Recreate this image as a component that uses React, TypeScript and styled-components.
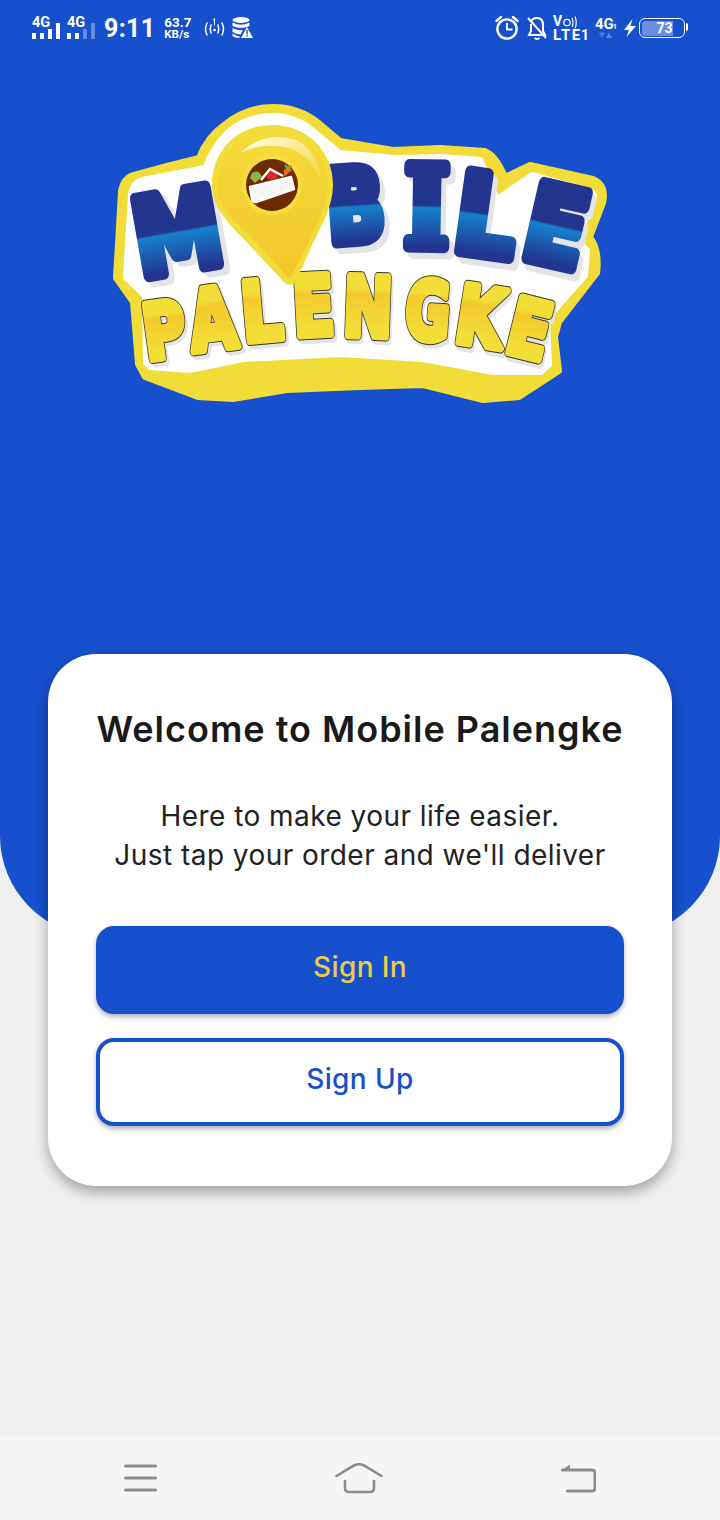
import styled, { createGlobalStyle } from 'styled-components';

const BLUE = '#1750cc';

const GlobalStyle = createGlobalStyle`
  html, body {
    margin: 0;
    padding: 0;
    background: #efefef;
  }
  * {
    box-sizing: border-box;
  }
`;

const blueLetters = [
  { ch: 'M', cx: 184, base: 270, size: 108, sx: 0.82, rot: -10, font: 'DejaVu Sans' },
  { ch: 'B', cx: 358, base: 241, size: 100, sx: 0.76, rot: -4, font: 'DejaVu Sans' },
  { ch: 'I', cx: 426, base: 247, size: 112, sx: 0.86, rot: 1, font: 'DejaVu Serif' },
  { ch: 'L', cx: 481, base: 254, size: 110, sx: 0.88, rot: 8, font: 'DejaVu Sans' },
  { ch: 'E', cx: 548, base: 263, size: 106, sx: 0.84, rot: 13, font: 'DejaVu Sans' },
];

const yellowLetters = [
  { ch: 'P', cx: 168, base: 357, size: 76, sx: 0.76, rot: -8 },
  { ch: 'A', cx: 216, base: 349, size: 84, sx: 0.72, rot: -7 },
  { ch: 'L', cx: 264, base: 340, size: 82, sx: 0.78, rot: -5 },
  { ch: 'E', cx: 315, base: 335, size: 82, sx: 0.74, rot: -3 },
  { ch: 'N', cx: 367, base: 336, size: 82, sx: 0.72, rot: 2 },
  { ch: 'G', cx: 426, base: 339, size: 80, sx: 0.68, rot: 4 },
  { ch: 'K', cx: 476, base: 345, size: 80, sx: 0.76, rot: 9 },
  { ch: 'E', cx: 523, base: 356, size: 78, sx: 0.78, rot: 14 },
];

function Logo() {
  return (
    <LogoSvg viewBox="100 95 520 320" width="520" height="320">
      <defs>
        <linearGradient id="blueFill" x1="0" y1="0" x2="0" y2="1">
          <stop offset="0.48" stopColor="#23358f" />
          <stop offset="0.5" stopColor="#1580cc" />
          <stop offset="0.8" stopColor="#23358f" />
        </linearGradient>
        <linearGradient id="yellowFill" x1="0" y1="0" x2="0" y2="1">
          <stop offset="0.3" stopColor="#f3de38" />
          <stop offset="0.36" stopColor="#f3c92c" />
          <stop offset="0.72" stopColor="#f3de38" />
        </linearGradient>
        <linearGradient id="pinFill" x1="0" y1="0" x2="0" y2="1">
          <stop offset="0" stopColor="#f5dc3a" />
          <stop offset="1" stopColor="#f3c52a" />
        </linearGradient>
        <linearGradient id="glare" x1="0" y1="0" x2="1" y2="0.6">
          <stop offset="0.1" stopColor="#fffbe0" />
          <stop offset="1" stopColor="#fffbe0" stopOpacity="0.2" />
        </linearGradient>
      </defs>

      <path
        d="M116 278 L121 192 Q123 178 134 175 L167 166 L199 158 Q207 137 224 125 Q246 107 273 107 Q300 107 320 124 L340 141 L393 150 L440 148 L485 151 Q496 155 505 177 L530 165 L593 179 Q607 185 603 203 L590 237 Q600 250 597 273 L559 322 L555 337 L559 371 L519 397 L483 400 L423 385 L360 387 L287 390 L233 399 L198 397 L145 377 L138 364 L133 302 L116 278 Z"
        fill="#f2dd38"
        stroke="#f2dd38"
        strokeWidth="6"
        strokeLinejoin="round"
      />
      <path
        d="M125 278 L130 194 Q132 182 142 179 L205 167 Q212 147 227 132 Q246 115 273 115 Q297 115 316 132 L340 152 L395 157 L440 156 L481 159 L497 198 L532 174 L586 189 Q596 192 595 197 L578 240 L588 250 L586 276 L548 319 L550 365 L541 373 L493 373 L423 360 L340 355 L243 360 L190 371 L150 368 L145 363 L144 296 L125 278 Z"
        fill="#ffffff"
        stroke="#ffffff"
        strokeWidth="4"
        strokeLinejoin="round"
      />

      {blueLetters.map((l) => (
        <g key={l.ch} transform={`translate(${l.cx} ${l.base}) rotate(${l.rot}) scale(${l.sx} 1)`}>
          <LogoText x="6" y="6" fontSize={l.size} fontFamily={l.font} fill="#e2e4e8" stroke="#e2e4e8" strokeWidth="12">
            {l.ch}
          </LogoText>
          <LogoText fontSize={l.size} fontFamily={l.font} fill="url(#blueFill)" stroke="url(#blueFill)" strokeWidth="12">
            {l.ch}
          </LogoText>
        </g>
      ))}

      {yellowLetters.map((l, i) => (
        <g key={i} transform={`translate(${l.cx} ${l.base}) rotate(${l.rot}) scale(${l.sx} 1)`}>
          <LogoText x="3" y="4" fontSize={l.size} fontFamily="DejaVu Sans" fill="#e2e4e8" stroke="#e2e4e8" strokeWidth="9">
            {l.ch}
          </LogoText>
          <LogoText fontSize={l.size} fontFamily="DejaVu Sans" fill="#38351f" stroke="#38351f" strokeWidth="9.500">
            {l.ch}
          </LogoText>
          <LogoText fontSize={l.size} fontFamily="DejaVu Sans" fill="url(#yellowFill)" stroke="url(#yellowFill)" strokeWidth="7.500">
            {l.ch}
          </LogoText>
        </g>
      ))}

      <path
        d="M212 185 C212 150 238 125 272 125 C306 125 333 150 333 185 C333 205 322 225 313 243 L297 279 Q290 290 283 281 L243 238 C225 220 212 205 212 185 Z"
        fill="#f2dd38"
      />
      <path
        d="M217 185 C217 155 242 130 272 130 C302 130 328 155 328 185 C328 205 316 226 308 243 L292 275 Q289 280 286 275 L248 234 C230 216 217 205 217 185 Z"
        fill="url(#pinFill)"
      />
      <path d="M240 153 Q265 130 296 140 Q318 150 321 180 Q312 158 292 149 Q265 141 240 153 Z" fill="url(#glare)" />
      <circle cx="272" cy="185" r="30" fill="#f6df3c" />
      <circle cx="272" cy="185" r="26" fill="#6e2a00" />
      <path d="M250 178 Q252 170 259 172 L262 177 L255 183 Z" fill="#86b84a" />
      <ellipse cx="272" cy="175" rx="6" ry="5" fill="#dd2a32" />
      <path d="M284 177 L292 170 L288 166 L284 170 Z" fill="#e2701e" />
      <path d="M285 165 L287 168 L292 166" stroke="#7fb04a" strokeWidth="2" fill="none" />
      <path d="M261 180 L270 169 L283 176" stroke="#ffffff" strokeWidth="2.500" fill="none" />
      <path d="M250 187 L291 177 L294 189 L256 202 Q253 202 252 199 Z" fill="#f6f6f6" stroke="#ffffff" strokeWidth="2.500" strokeLinejoin="round" />
    </LogoSvg>
  );
}

function SignalIcon({ level }: { level: number }) {
  const bars = [
    { x: 0, y: 33, h: 6 },
    { x: 8, y: 33, h: 6 },
    { x: 16, y: 29, h: 10 },
    { x: 24, y: 23, h: 16 },
  ];
  return (
    <svg width="28" height="40" viewBox="0 0 28 40">
      <StatusSvgText x="0" y="27" fontSize="14.5">4G</StatusSvgText>
      {bars.map((b, i) => (
        <rect key={b.x} x={b.x} y={b.y} width="4" height={b.h} fill="#fff" opacity={i < level ? 1 : 0.35} />
      ))}
    </svg>
  );
}

function WirelessIcon() {
  return (
    <svg width="21" height="40" viewBox="0 0 21 40" fill="none" stroke="#fff" strokeWidth="1.500" strokeLinecap="round">
      <path d="M3 23 Q0 29 3 35" />
      <path d="M7 25 Q5.500 29 7 33" />
      <path d="M18 23 Q21 29 18 35" />
      <path d="M14 25 Q15.500 29 14 33" />
      <circle cx="10.500" cy="30" r="1.300" fill="#fff" stroke="none" />
      <path d="M10.500 19 V25 M9.300 20 L10.500 19" strokeWidth="1" />
    </svg>
  );
}

function DataWarnIcon() {
  return (
    <svg width="21" height="40" viewBox="0 0 21 40" fill="#fff">
      <ellipse cx="9" cy="20" rx="8.500" ry="3" />
      <path d="M0.500 22.500 Q9 27 17.500 22.500 V26 Q9 30 0.500 26 Z" />
      <path d="M0.500 28 Q6 31 11 30 L8.500 34.500 Q4 34 0.500 32 Z" />
      <path d="M0.500 33.500 Q4 36 8 36.500 L7 38 Q3 38 0.500 36 Z" />
      <path d="M15 27 L21 38 H9 Z" />
      <rect x="14.300" y="30" width="1.400" height="4.500" fill={BLUE} />
      <rect x="14.300" y="35.200" width="1.400" height="1.400" fill={BLUE} />
    </svg>
  );
}

function AlarmIcon() {
  return (
    <svg width="24" height="40" viewBox="0 0 24 40" fill="none" stroke="#fff" strokeWidth="2.400">
      <circle cx="12" cy="29" r="9.600" />
      <path d="M12 23 V29.500 H17.500" strokeWidth="2" />
      <path d="M1.500 21 L6 17" strokeLinecap="round" />
      <path d="M22.500 21 L18 17" strokeLinecap="round" />
    </svg>
  );
}

function BellOffIcon() {
  return (
    <svg width="20" height="40" viewBox="0 0 20 40" fill="none" stroke="#fff" strokeWidth="2">
      <path d="M4 22 Q5 18 10 18 Q16 18 16 25 V31 L18 35 H2 L4 31 V24" />
      <path d="M7.500 38 Q10 40 12.500 38" />
      <path d="M1 18 L19 38" />
    </svg>
  );
}

function VolteIcon() {
  return (
    <svg width="36" height="44" viewBox="0 0 36 44">
      <StatusSvgText x="0" y="26" fontSize="14" fontWeight="500">V</StatusSvgText>
      <circle cx="14" cy="22.500" r="3.200" fill="none" stroke="#fff" strokeWidth="1.200" />
      <path d="M19 18 Q21 22.500 19 27 M22 16.500 Q24.500 22.500 22 28.500" fill="none" stroke="#fff" strokeWidth="1.200" />
      <StatusSvgText x="0" y="40" fontSize="15" letterSpacing="1.500">LTE</StatusSvgText>
      <StatusSvgText x="28" y="40" fontSize="14">1</StatusSvgText>
    </svg>
  );
}

function NetworkIcon() {
  return (
    <svg width="22" height="40" viewBox="0 0 22 40">
      <StatusSvgText x="0" y="29" fontSize="15">4G</StatusSvgText>
      <StatusSvgText x="18" y="29" fontSize="7" fontWeight="400">1</StatusSvgText>
      <path d="M4 32.500 H10 L7 38 Z" fill="#7f9fe6" opacity="0.55" />
      <path d="M11 38 H17 L14 32.500 Z" fill="#7f9fe6" opacity="0.7" />
    </svg>
  );
}

function BoltIcon() {
  return (
    <svg width="12" height="40" viewBox="0 0 12 40" fill="#fff">
      <path d="M8.500 19 L0 30 H5 L2.500 37 L12 26 H6.500 Z" />
    </svg>
  );
}

function App() {
  return (
    <Screen>
      <GlobalStyle />
      <Hero>
        <StatusBar>
          <StatusGroup>
            <SignalIcon level={4} />
            <SignalIcon level={2} />
            <Time>9:11</Time>
            <Speed>
              <span>63.7</span>
              <small>KB/s</small>
            </Speed>
            <WirelessIcon />
            <DataWarnIcon />
          </StatusGroup>
          <RightGroup>
            <AlarmIcon />
            <BellOffIcon />
            <VolteIcon />
            <NetworkIcon />
            <BoltIcon />
            <Battery>
              <BatteryLevel>73</BatteryLevel>
            </Battery>
          </RightGroup>
        </StatusBar>
        <Logo />
      </Hero>

      <Main>
        <Card>
          <Title>Welcome to Mobile Palengke</Title>
          <Subtitle>
            Here to make your life easier.
            <br />
            Just tap your order and we'll deliver
          </Subtitle>
          <Actions>
            <ActionButton type="button" $primary>
              Sign In
            </ActionButton>
            <ActionButton type="button">Sign Up</ActionButton>
          </Actions>
        </Card>
      </Main>

      <NavBar>
        <svg width="33" height="30" viewBox="0 0 33 30" stroke="#8c8c8c" strokeWidth="3" strokeLinecap="round">
          <path d="M1.500 3 H31.500 M1.500 15 H31.500 M1.500 27 H31.500" />
        </svg>
        <svg width="48" height="32" viewBox="0 0 48 32" fill="none" stroke="#8c8c8c" strokeWidth="2.600" strokeLinecap="round">
          <path d="M1.500 14 L19 3.500 Q24 1 29 3.500 L46.500 14" />
          <path d="M10 19 V26 Q10 30 14 30 H35 Q39 30 39 26 V19" />
        </svg>
        <svg width="35" height="30" viewBox="0 0 35 30" fill="none" stroke="#8c8c8c" strokeWidth="3" strokeLinecap="round">
          <path d="M1.500 7 H31 Q34 7 34 10 V25 Q34 28 31 28 H6.500" />
          <path d="M9 1.500 V7 H1 Z" fill="#8c8c8c" stroke="none" />
        </svg>
      </NavBar>
    </Screen>
  );
}

const Screen = styled.div`
  display: flex;
  flex-direction: column;
  width: 720px;
  height: 1520px;
  overflow: hidden;
  background: #efefef;
  font-family: Inter, 'Noto Sans', sans-serif;
`;

const Hero = styled.header`
  display: flex;
  flex-direction: column;
  align-items: center;
  flex: 0 0 936px;
  background: ${BLUE};
  border-radius: 0 0 100px 100px;
`;

const StatusBar = styled.div`
  display: flex;
  justify-content: space-between;
  align-items: flex-start;
  width: 100%;
  height: 54px;
  padding: 0 32px;
  font-family: Roboto, sans-serif;
  color: #fff;
`;

const StatusGroup = styled.div`
  display: flex;
  align-items: flex-start;
  gap: 7px;
`;

const RightGroup = styled(StatusGroup)`
  > svg:nth-child(1) {
    margin-right: 1px;
  }

  > svg:nth-child(2) {
    margin-right: -1px;
  }

  > svg:nth-child(3) {
    margin-right: -1px;
  }
`;

const StatusSvgText = styled.text`
  font-family: Roboto, sans-serif;
  font-weight: 700;
  fill: #fff;
`;

const Time = styled.span`
  margin: 16px 2px 0 2px;
  font-size: 25px;
  line-height: 25px;
  font-weight: 700;
  letter-spacing: 0.3px;
`;

const Speed = styled.span`
  display: flex;
  flex-direction: column;
  align-items: flex-start;
  width: 29px;
  margin: 15px 4px 0 0;
  font-size: 13.5px;
  line-height: 14px;
  font-weight: 700;

  small {
    font-size: 11.5px;
    line-height: 11px;
  }
`;

const Battery = styled.div`
  position: relative;
  display: flex;
  width: 46px;
  height: 20px;
  margin: 18px 3px 0 -4px;
  padding: 1.5px;
  border: 1.2px solid #fff;
  border-radius: 6px;

  &::after {
    content: '';
    position: absolute;
    top: 4px;
    right: -4px;
    width: 2.5px;
    height: 8px;
    background: #fff;
    border-radius: 0 2px 2px 0;
  }
`;

const BatteryLevel = styled.div`
  width: 31px;
  background: #6b8ee0;
  border-radius: 3px 0 0 3px;
  font-size: 14px;
  line-height: 14px;
  font-weight: 700;
  text-align: right;
`;

const LogoSvg = styled.svg`
  flex: none;
  margin-top: 41px;
`;

const LogoText = styled.text<{ fontSize: number }>`
  font-weight: 700;
  font-size: ${(p) => p.fontSize}px;
  text-anchor: middle;
  stroke-linejoin: round;
`;

const Main = styled.main`
  flex: 1;
  display: flex;
  justify-content: center;
  align-items: flex-start;
`;

const Card = styled.section`
  position: relative;
  width: 624px;
  margin-top: -282px;
  padding: 50px 48px 60px;
  background: #fff;
  border-radius: 48px;
  box-shadow: 0 6px 14px rgba(0, 0, 0, 0.32);
`;

const Title = styled.h1`
  margin: 0;
  font-size: 36px;
  line-height: 50px;
  font-weight: 600;
  letter-spacing: 1px;
  color: #1a1a1a;
  text-align: center;
  white-space: nowrap;
`;

const Subtitle = styled.p`
  margin: 43px 0 0;
  font-size: 28px;
  line-height: 39px;
  font-weight: 400;
  letter-spacing: 0.45px;
  color: #222;
  text-align: center;
  white-space: nowrap;
`;

const Actions = styled.div`
  display: flex;
  flex-direction: column;
  gap: 24px;
  margin-top: 51px;
`;

const ActionButton = styled.button<{ $primary?: boolean }>`
  height: 88px;
  padding: 0 0 6px;
  font-family: inherit;
  font-size: 28px;
  font-weight: 500;
  letter-spacing: 0.4px;
  border: 4px solid ${BLUE};
  border-radius: 18px;
  background: ${(p) => (p.$primary ? BLUE : '#fff')};
  color: ${(p) => (p.$primary ? '#eccd4a' : BLUE)};
  box-shadow: 0 3px 5px rgba(0, 0, 0, 0.3);
`;

const NavBar = styled.nav`
  display: flex;
  justify-content: space-between;
  align-items: center;
  flex: 0 0 84px;
  padding: 0 124px;
  background: #f5f5f5;
`;

export default App;
